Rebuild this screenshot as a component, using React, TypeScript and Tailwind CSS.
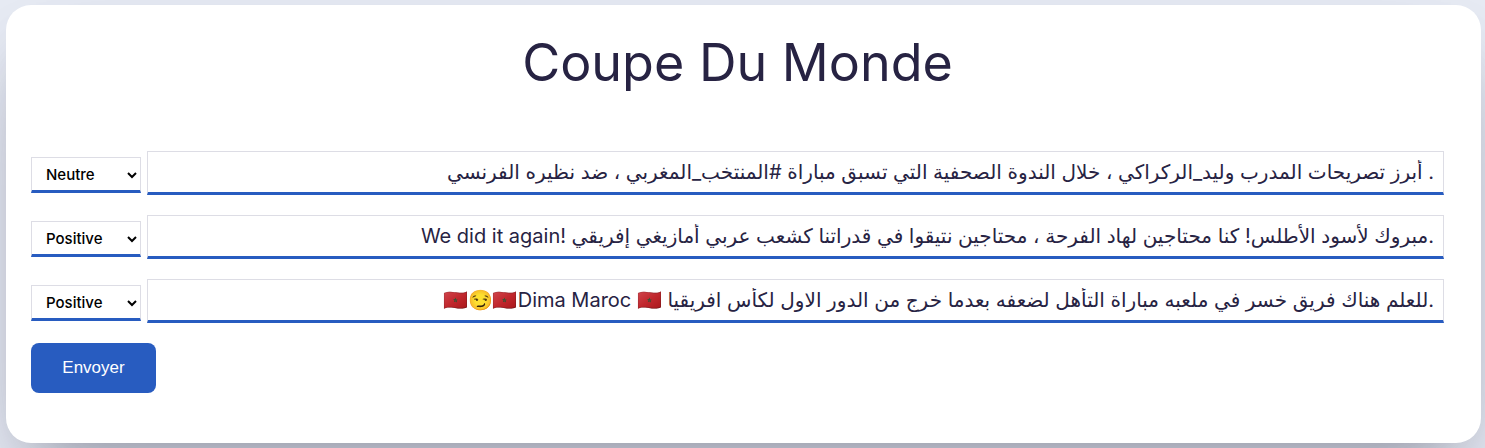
type Sentiment = "Positive" | "Neutre" | "Negative";

interface Comment {
  text: string;
  sentiment: Sentiment;
}

const sentiments: Sentiment[] = ["Positive", "Neutre", "Negative"];

const comments: Comment[] = [
  {
    sentiment: "Neutre",
    text: "أبرز تصريحات المدرب وليد_الركراكي ، خلال الندوة الصحفية التي تسبق مباراة #المنتخب_المغربي ، ضد نظيره الفرنسي .",
  },
  {
    sentiment: "Positive",
    text: "We did it again! مبروك لأسود الأطلس! كنا محتاجين لهاد الفرحة ، محتاجين نتيقوا في قدراتنا كشعب عربي أمازيغي إفريقي.",
  },
  {
    sentiment: "Positive",
    text: "🇲🇦😏🇲🇦Dima Maroc 🇲🇦 للعلم هناك فريق خسر في ملعبه مباراة التأهل لضعفه بعدما خرج من الدور الاول لكأس افريقيا.",
  },
];

function CommentRow({ comment, index }: { comment: Comment; index: number }) {
  return (
    <div className="flex items-center gap-1.5">
      <select
        aria-label={`Sentiment ${index + 1}`}
        defaultValue={comment.sentiment}
        className="mt-1 h-9 w-[110px] shrink-0 border border-b-3 border-[#dddde5] border-b-[#285cc0] bg-white pl-2.5 text-[15px] font-medium text-black"
      >
        {sentiments.map((s) => (
          <option key={s}>{s}</option>
        ))}
      </select>
      <input
        type="text"
        aria-label={`Commentaire ${index + 1}`}
        defaultValue={comment.text}
        className="h-11 min-w-0 flex-1 border border-b-3 border-[#dddde5] border-b-[#285cc0] bg-white px-[9px] text-right text-xl text-[#272343]"
      />
    </div>
  );
}

export default function App() {
  return (
    <div className="min-h-screen overflow-hidden bg-[#e7ebf4] pt-[5px] pr-1 pb-[5px] pl-1.5 font-['Inter','Noto_Color_Emoji','DejaVu_Sans',sans-serif] text-[#272343]">
      <main className="rounded-[25px] bg-white pt-5 pr-[37px] pb-[50px] pl-[25px] shadow-[0_50px_100px_-20px_rgba(50,50,93,0.25),0_30px_60px_-30px_rgba(0,0,0,0.3)]">
        <h1 className="text-center text-[52px] leading-[76px] font-normal">Coupe Du Monde</h1>
        <form className="mt-[50px] flex flex-col gap-5" onSubmit={(e) => e.preventDefault()}>
          {comments.map((comment, i) => (
            <CommentRow key={i} comment={comment} index={i} />
          ))}
          <button
            type="submit"
            className="h-[50px] w-[125px] rounded-lg bg-[#285cc0] font-['Liberation_Sans',sans-serif] text-[17px] text-white"
          >
            Envoyer
          </button>
        </form>
      </main>
    </div>
  );
}
